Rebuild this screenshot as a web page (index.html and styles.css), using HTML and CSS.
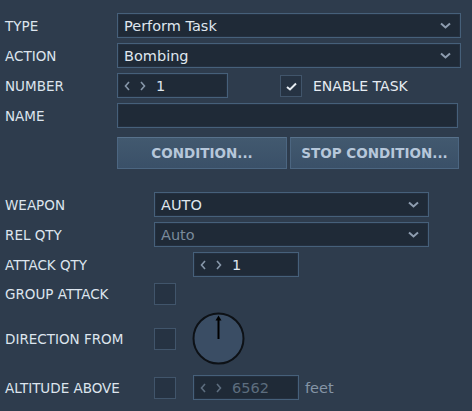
FILE: index.html
```html
<!DOCTYPE html>
<html>
  <head>
    <meta charset="UTF-8" />
    <title>Perform Task</title>
    <link rel="stylesheet" href="styles.css">
  </head>
  <body>
    <div class="panel">
      <div class="row">
        <label class="label">TYPE</label>
        <div class="field select wide">
          <span>Perform Task</span>
          <svg class="chevron" width="11" height="7" viewBox="0 0 11 7"><path d="M1 1.5 L5.5 5.5 L10 1.5" /></svg>
        </div>
      </div>
      <div class="row">
        <label class="label">ACTION</label>
        <div class="field select wide">
          <span>Bombing</span>
          <svg class="chevron" width="11" height="7" viewBox="0 0 11 7"><path d="M1 1.5 L5.5 5.5 L10 1.5" /></svg>
        </div>
      </div>
      <div class="row">
        <label class="label">NUMBER</label>
        <div class="field spin number">
          <svg class="arrows" width="24" height="10" viewBox="0 0 24 10"><path d="M5 1 L1.5 5 L5 9 M17 1 L20.5 5 L17 9" /></svg>
          <span>1</span>
        </div>
        <div class="check checked">
          <svg width="11" height="9" viewBox="0 0 11 9"><path d="M1 5 L4 7.5 L10 1.5" /></svg>
        </div>
        <span class="check-text">ENABLE TASK</span>
      </div>
      <div class="row name-row">
        <label class="label">NAME</label>
        <div class="field name"></div>
      </div>
      <div class="buttons">
        <button class="button">CONDITION...</button>
        <button class="button">STOP CONDITION...</button>
      </div>

      <div class="section">
        <div class="row">
          <label class="label long">WEAPON</label>
          <div class="field select weapon">
            <span>AUTO</span>
            <svg class="chevron" width="11" height="7" viewBox="0 0 11 7"><path d="M1 1.5 L5.5 5.5 L10 1.5" /></svg>
          </div>
        </div>
        <div class="row">
          <label class="label long">REL QTY</label>
          <div class="field select weapon disabled">
            <span>Auto</span>
            <svg class="chevron" width="11" height="7" viewBox="0 0 11 7"><path d="M1 1.5 L5.5 5.5 L10 1.5" /></svg>
          </div>
        </div>
        <div class="row">
          <label class="label long">ATTACK QTY</label>
          <div class="field spin qty">
            <svg class="arrows" width="24" height="10" viewBox="0 0 24 10"><path d="M5 1 L1.5 5 L5 9 M17 1 L20.5 5 L17 9" /></svg>
            <span>1</span>
          </div>
        </div>
        <div class="row short">
          <label class="label long">GROUP ATTACK</label>
          <div class="check"></div>
        </div>
        <div class="row dial-row">
          <label class="label long">DIRECTION FROM</label>
          <div class="check"></div>
          <svg class="dial" width="54" height="54" viewBox="0 0 54 54">
            <circle cx="26.5" cy="26.5" r="25" />
            <path class="needle" d="M26.5 27 L26.5 6" />
            <path class="tip" d="M23.5 8.5 L26.5 3.5 L29.5 8.5 Z" />
          </svg>
        </div>
        <div class="row altitude-row">
          <label class="label long">ALTITUDE ABOVE</label>
          <div class="check"></div>
          <div class="field spin qty disabled">
            <svg class="arrows" width="24" height="10" viewBox="0 0 24 10"><path d="M5 1 L1.5 5 L5 9 M17 1 L20.5 5 L17 9" /></svg>
            <span>6562</span>
          </div>
          <span class="unit">feet</span>
        </div>
      </div>
    </div>
  </body>
</html>
```

FILE: styles.css
```css
/* Base panel */
body {
  margin: 0;
  padding: 0;
  background-color: #2e3c4d;
  font-family: "DejaVu Sans", sans-serif;
  color: #dde5ee;
}
.panel {
  padding: 13px 0 0 5px;
}

/* Rows of label + control */
.row {
  display: flex;
  align-items: center;
  height: 25px;
  margin-bottom: 5px;
}
.name-row {
  margin-top: 1px;
}
.label {
  width: 112px;
  flex-shrink: 0;
  font-size: 13.5px;
}
.label.long {
  width: 149px;
}

/* Inputs and selects */
.field {
  box-sizing: border-box;
  height: 25px;
  display: flex;
  align-items: center;
  padding: 0 9px 0 6px;
  background-color: #1f2a37;
  border: 1px solid #46607a;
  box-shadow: inset 0 0 0 1px #243040;
  font-size: 14.5px;
  color: #dfe6ee;
}
.field span {
  flex: 1;
}
.wide {
  width: 344px;
}
.number {
  width: 111px;
}
.name {
  width: 341px;
}
.weapon {
  width: 275px;
}
.qty {
  width: 106px;
  margin-left: 39px;
}
.chevron path {
  fill: none;
  stroke: #8e9db0;
  stroke-width: 2;
}
.arrows {
  margin-right: 8px;
  flex-shrink: 0;
}
.arrows path {
  fill: none;
  stroke: #8797a9;
  stroke-width: 1.6;
}
.disabled {
  color: #7a8a9b;
}
.spin.disabled {
  color: #5d6d7e;
}
.spin.disabled .arrows path {
  stroke: #5d6d7e;
}

/* Checkboxes */
.check {
  box-sizing: border-box;
  width: 22px;
  height: 22px;
  flex-shrink: 0;
  background-color: #263343;
  border: 1px solid #41556b;
  display: flex;
  align-items: center;
  justify-content: center;
}
.checked {
  margin-left: 52px;
  padding-top: 2px;
}
.check svg path {
  fill: none;
  stroke: #e6ecf2;
  stroke-width: 2;
}
.check-text {
  margin-left: 11px;
  font-size: 14px;
  color: #e6ecf2;
}

/* Buttons */
.buttons {
  display: grid;
  grid-template-columns: 170px 169px;
  gap: 3px;
  margin: 9px 0 0 112px;
}
.button {
  height: 32px;
  background: linear-gradient(#42596f, #3a5068);
  border: 1px solid #4c6681;
  border-top-color: #58728c;
  color: #b6c7da;
  font-family: "DejaVu Sans", sans-serif;
  font-weight: bold;
  font-size: 13.5px;
  padding: 0;
}

/* Lower section */
.section {
  margin-top: 23px;
}
.short {
  height: 23px;
}
.dial-row {
  height: 53px;
  margin-top: 7px;
  margin-bottom: 10px;
}
.dial {
  margin-left: 16px;
}
.dial circle {
  fill: #3a4d64;
  stroke: #0d1116;
  stroke-width: 2;
}
.dial .needle {
  stroke: #000;
  stroke-width: 2;
}
.dial .tip {
  fill: #000;
}
.altitude-row .qty {
  margin-left: 17px;
}
.unit {
  margin-left: 6px;
  font-size: 14.5px;
  color: #8595a6;
}
```
